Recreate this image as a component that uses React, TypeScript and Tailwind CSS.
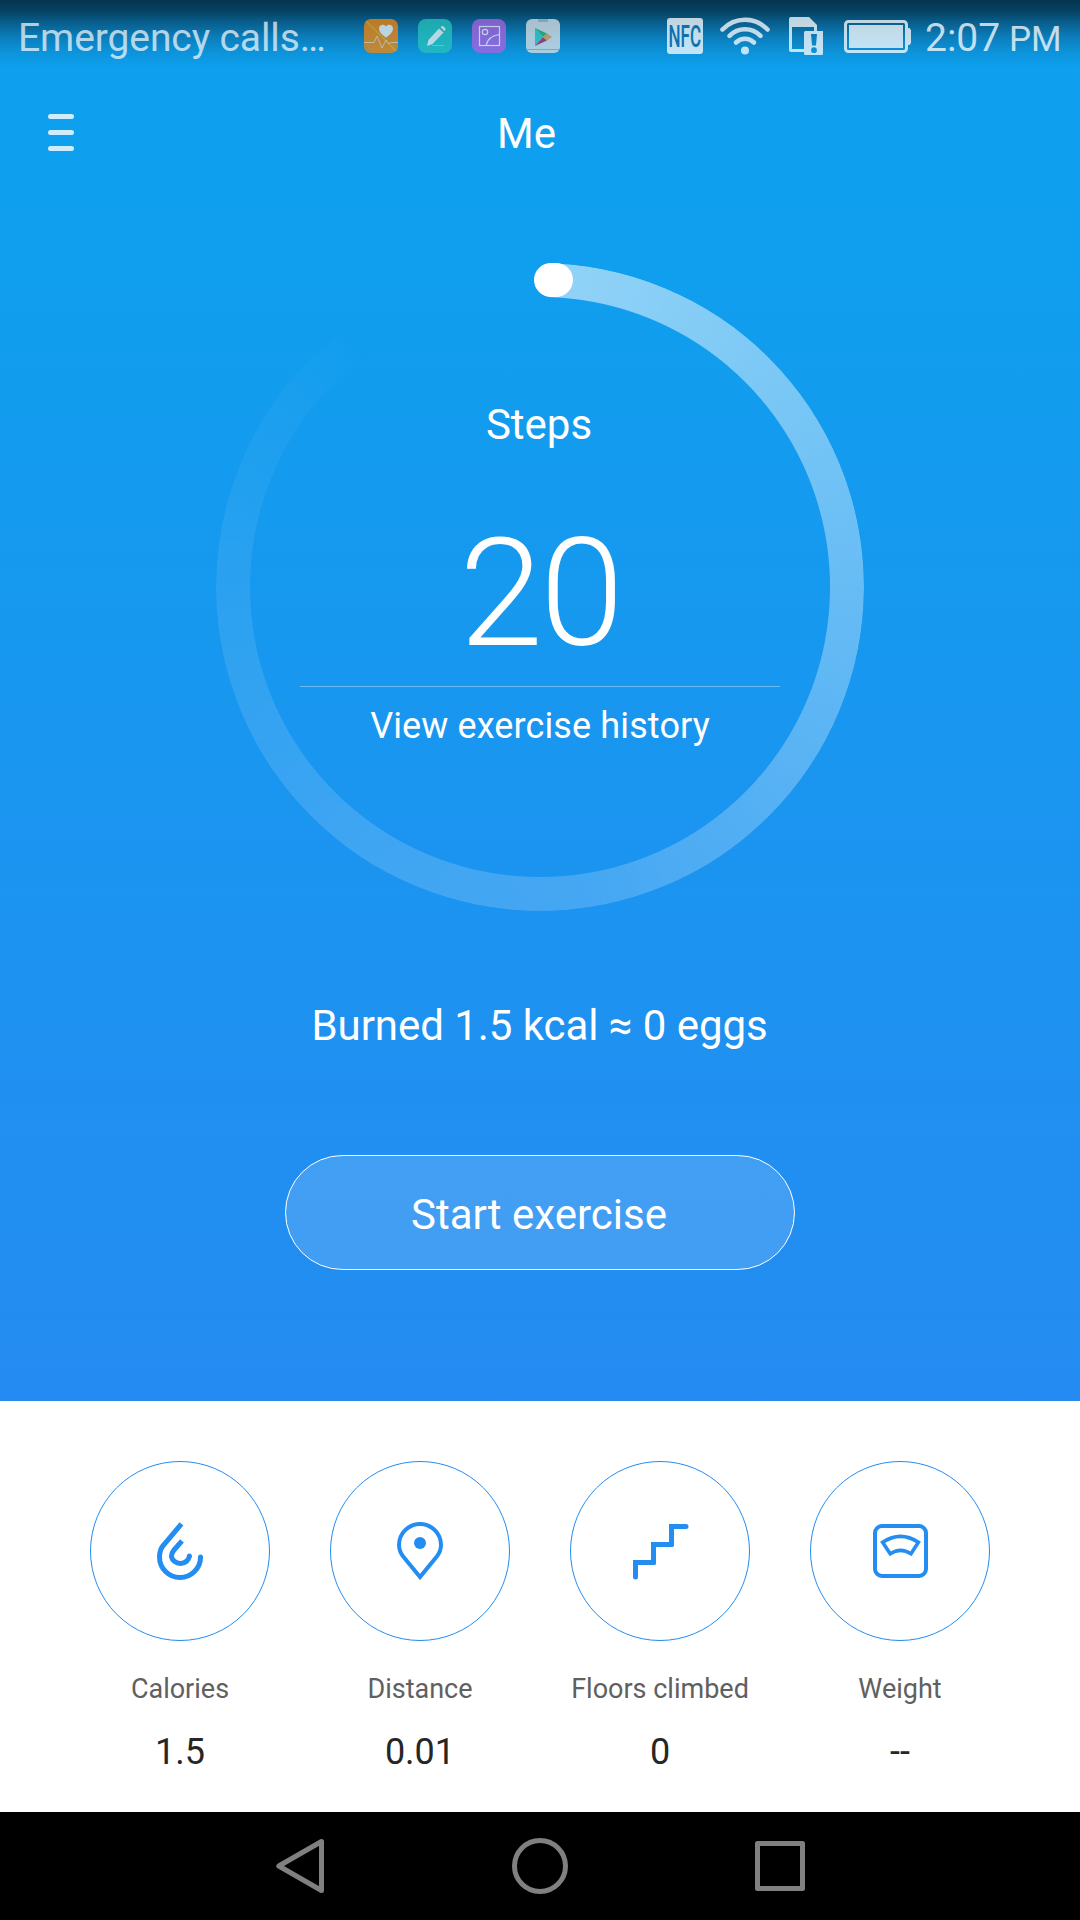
import type { ReactNode } from 'react'

type Metric = {
  label: string
  value: string
  icon: ReactNode
}

function CaloriesIcon() {
  return (
    <svg className="size-[60px]" viewBox="0 0 60 60" fill="none" stroke="currentColor" strokeWidth="5">
      <path d="M31.5 2.8 14 23.5Q9.5 28.5 9.5 36A20.5 20.5 0 0 0 50.5 36" />
      <path d="M32 19.8 24 29Q21.4 32 21.4 35.5A9.1 8.4 0 0 0 39.4 35" />
      <circle cx="50.5" cy="36" r="2.5" fill="currentColor" stroke="none" />
      <circle cx="39.4" cy="35" r="2.5" fill="currentColor" stroke="none" />
    </svg>
  )
}

function DistanceIcon() {
  return (
    <svg className="size-[60px]" viewBox="0 0 60 60" fill="none" stroke="currentColor" strokeWidth="4">
      <path d="M30 56 13.2 35.5Q9 30 9 24A21 21 0 0 1 51 24Q51 30 46.8 35.5Z" />
      <circle cx="30" cy="22" r="6" fill="currentColor" stroke="none" />
    </svg>
  )
}

function FloorsIcon() {
  return (
    <svg
      className="size-[60px]"
      viewBox="0 0 60 60"
      fill="none"
      stroke="currentColor"
      strokeWidth="5"
      strokeLinecap="round"
    >
      <path d="M5.5 56V41.5H23.5" />
      <path d="M23.5 41.5V23.5H41.5" />
      <path d="M41.5 23.5V5.5H56" />
    </svg>
  )
}

function WeightIcon() {
  return (
    <svg className="size-[60px]" viewBox="0 0 60 60" fill="none" stroke="currentColor" strokeWidth="4">
      <rect x="5" y="5" width="51" height="50" rx="7" />
      <path d="M12.6 21.3Q30.5 9.3 48.4 21.3L41 32.8Q30.5 25.8 20.2 32.8Z" strokeWidth="3.6" />
    </svg>
  )
}

const metrics: Metric[] = [
  { label: 'Calories', value: '1.5', icon: <CaloriesIcon /> },
  { label: 'Distance', value: '0.01', icon: <DistanceIcon /> },
  { label: 'Floors climbed', value: '0', icon: <FloorsIcon /> },
  { label: 'Weight', value: '--', icon: <WeightIcon /> },
]

function NotificationIcons() {
  return (
    <div className="flex gap-5 opacity-75">
      <svg className="size-[34px]" viewBox="0 0 34 34" fill="none">
        <rect width="34" height="34" rx="7" fill="#f98508" />
        <path d="M2 2 32 32" stroke="#e8b010" strokeWidth="1.2" />
        <path d="M0 23.5H10L13 17 18 29 22 21 25 25 27 23.5H34" stroke="#f0d0a0" strokeWidth="1" />
        <path d="M22 18.5C17 15 15 12.5 15 9.5C15 5.5 20 4.5 22 7.5C24 4.5 29 5.5 29 9.5C29 12.5 27 15 22 18.5Z" fill="#f2f6f8" />
      </svg>
      <svg className="size-[34px]" viewBox="0 0 34 34" fill="none">
        <rect width="34" height="34" rx="8" fill="#27c3bb" />
        <path d="M9 27 10.5 21 21 9.5 25.5 13.5 14.5 25Z" fill="#f2f6f8" />
        <path d="M22.5 8 24 7Q27.5 8 27.5 10.5L26.5 12Z" fill="#f2f6f8" />
        <path d="M14 26.5H26" stroke="#6fd8d4" strokeWidth="1" />
      </svg>
      <svg className="size-[34px]" viewBox="0 0 34 34" fill="none">
        <rect width="34" height="34" rx="8" fill="#ac62e2" />
        <g stroke="#f2f6f8" strokeWidth="1.2">
          <rect x="7.5" y="7.5" width="20" height="19" />
          <circle cx="13" cy="13" r="2.7" />
          <path d="M14 26.5Q16 17 27.5 15.5" />
        </g>
      </svg>
      <svg className="size-[34px]" viewBox="0 0 34 34" fill="none">
        <rect width="34" height="34" rx="6" fill="#dfe2e4" />
        <path d="M12 0V3H22V0" fill="#b3bdc2" />
        <path d="M1 30.5H33" stroke="#a3afb5" strokeWidth="1" />
        <path d="M9 9V27L17 18Z" fill="#35cfc9" />
        <path d="M9 9 21 14.5 17 18Z" fill="#2fb56b" />
        <path d="M9 27 21 21.5 17 18Z" fill="#b52e62" />
        <path d="M21 14.5 26 18 21 21.5 17 18Z" fill="#e8a254" />
      </svg>
    </div>
  )
}

function SystemIcons() {
  return (
    <div className="flex items-center text-white/75">
      <svg className="mr-[17px] h-9 w-9 overflow-visible" viewBox="0 0 36 36">
        <rect width="36" height="36" rx="3" fill="currentColor" />
        <text
          x="1.5"
          y="29.2"
          fontSize="31"
          fontFamily="Roboto, sans-serif"
          fontWeight="500"
          fill="#0b72b0"
          textLength="32.5"
          lengthAdjust="spacingAndGlyphs"
        >
          NFC
        </text>
      </svg>
      <svg
        className="mr-[19px] h-[38px] w-[50px]"
        viewBox="0 0 50 38"
        fill="none"
        stroke="currentColor"
        strokeWidth="4.6"
        strokeLinecap="round"
      >
        <path d="M2.5 12.5Q12 2.8 25 2.8T47.5 12.5" />
        <path d="M9.5 18.8Q16 12.2 25 12.2T40.5 18.8" />
        <path d="M16 25.5Q20 21.7 25 21.7T34 25.5" />
        <circle cx="25" cy="33.5" r="4" fill="currentColor" stroke="none" />
      </svg>
      <svg className="mr-[21px] h-[38px] w-[34px]" viewBox="0 0 34 38" fill="currentColor">
        <path
          fillRule="evenodd"
          d="M2 0H20L28 8V14H34V36.5Q34 38 32.5 38H16.5Q15 38 15 36.5V35H2Q0 35 0 33V2Q0 0 2 0ZM3 10V32H15V15.5Q15 14 16.5 14H25V10ZM22 17 23 28.5H27L28 17ZM25 30.3A2.9 2.9 0 1 0 25 36.1A2.9 2.9 0 1 0 25 30.3Z"
        />
      </svg>
      <svg className="mr-[14px] h-[33px] w-[67px]" viewBox="0 0 67 33" fill="currentColor">
        <rect x="1.5" y="1.5" width="61" height="30" rx="3" fill="none" stroke="currentColor" strokeWidth="3" />
        <rect x="5" y="5" width="54" height="23" />
        <path d="M64 8H65.5L67 10V23L65.5 25H64Z" />
      </svg>
    </div>
  )
}

function StatusBar() {
  return (
    <div className="flex h-[75px] items-start bg-[linear-gradient(to_bottom,rgba(0,0,0,0.67)_0px,rgba(0,0,0,0.6)_10px,rgba(0,0,0,0.42)_22px,rgba(0,0,0,0.22)_37px,rgba(0,0,0,0.09)_51px,rgba(0,0,0,0)_68px)] pt-3.5 pl-[18px]">
      <span className="w-[346px] text-[39px] leading-[48px] tracking-[-0.1px] whitespace-nowrap text-white/70">
        Emergency calls…
      </span>
      <div className="pt-[5px]">
        <NotificationIcons />
      </div>
      <div className="ml-[107px] pt-[3px]">
        <SystemIcons />
      </div>
      <span className="text-[39px] leading-[48px] whitespace-nowrap text-white/75">
        2:07 <span className="-ml-px text-[35px]">PM</span>
      </span>
    </div>
  )
}

function Header() {
  return (
    <div className="flex h-[116px] items-center pl-12">
      <button type="button" aria-label="Menu" className="mb-px flex w-[26px] flex-col gap-[11px]">
        <span className="h-[5px] rounded-full bg-white/80" />
        <span className="h-[5px] rounded-full bg-white/80" />
        <span className="h-[5px] rounded-full bg-white/80" />
      </button>
      <h1 className="ml-[423px] pt-0.5 text-[42px] leading-[50px] text-white">Me</h1>
    </div>
  )
}

function StepsRing() {
  return (
    <div className="relative mx-auto mt-[72px] h-[648px] w-[648px]">
      <div className="absolute inset-0 rounded-full bg-[conic-gradient(transparent_2deg,rgba(255,255,255,0.55)_2deg,rgba(255,255,255,0.35)_90deg,rgba(255,255,255,0.19)_170deg,rgba(255,255,255,0.16)_215deg,rgba(255,255,255,0.09)_270deg,rgba(255,255,255,0.012)_320deg,transparent_324deg)] [mask-image:radial-gradient(circle_at_center,transparent_289.5px,black_290.5px)]" />
      <div className="absolute top-0 left-[317.5px] h-[34px] w-[39px] rounded-full bg-white" />
      <div className="relative flex flex-col items-center pt-[137px] text-white">
        <span className="pr-0.5 text-[42px] leading-[50px]">Steps</span>
        <span className="mt-16 text-[151px] leading-[160px] font-light tracking-[-3px]">20</span>
        <div className="mt-3 h-px w-[480px] bg-white/35" />
        <span className="mt-[14px] text-[36px] leading-[50px] tracking-[0.12px]">View exercise history</span>
      </div>
    </div>
  )
}

function MetricItem({ label, value, icon }: Metric) {
  return (
    <div className="flex flex-col items-center">
      <div className="flex size-[180px] items-center justify-center rounded-full border border-[#238df2] text-[#238df2]">
        {icon}
      </div>
      <span className="mt-8 text-[27px] leading-8 whitespace-nowrap text-[#606060]">{label}</span>
      <span className="mt-[27px] text-[36px] leading-10 text-[#262626]">{value}</span>
    </div>
  )
}

function NavBar() {
  return (
    <div className="flex h-[108px] items-center bg-black pl-[270px]">
      <svg className="h-[60px] w-[60px]" viewBox="0 0 60 60" fill="none" stroke="#808080" strokeWidth="5" strokeLinejoin="round">
        <path d="M51.5 5.5V54.5L8.8 30Z" />
      </svg>
      <svg className="ml-[180px] h-[60px] w-[60px]" viewBox="0 0 60 60" fill="none" stroke="#808080" strokeWidth="5">
        <circle cx="30" cy="30" r="25.5" />
      </svg>
      <svg className="ml-[180px] h-[60px] w-[60px]" viewBox="0 0 60 60" fill="none" stroke="#808080" strokeWidth="5" strokeLinejoin="round">
        <path d="M7.5 7.5H52.5V52.5H7.5Z" />
      </svg>
    </div>
  )
}

export default function App() {
  return (
    <div className="flex h-[1920px] w-[1080px] flex-col overflow-hidden bg-white font-['Roboto',sans-serif]">
      <main className="flex h-[1401px] flex-col bg-linear-to-b/srgb from-[#0ea0ee] from-[12%] to-[#258bf2]">
        <StatusBar />
        <Header />
        <StepsRing />
        <p className="mt-[90px] pr-px text-center text-[42px] leading-[50px] tracking-[-0.05px] text-white">
          Burned 1.5 kcal ≈ 0 eggs
        </p>
        <button
          type="button"
          className="mx-auto mt-[104px] h-[115px] w-[510px] rounded-full border border-white bg-white/15 pt-1 pr-0.5 text-[42px] text-white"
        >
          Start exercise
        </button>
      </main>
      <section className="grid h-[411px] grid-cols-4 px-[60px] pt-[60px]">
        {metrics.map((m) => (
          <MetricItem key={m.label} {...m} />
        ))}
      </section>
      <NavBar />
    </div>
  )
}
